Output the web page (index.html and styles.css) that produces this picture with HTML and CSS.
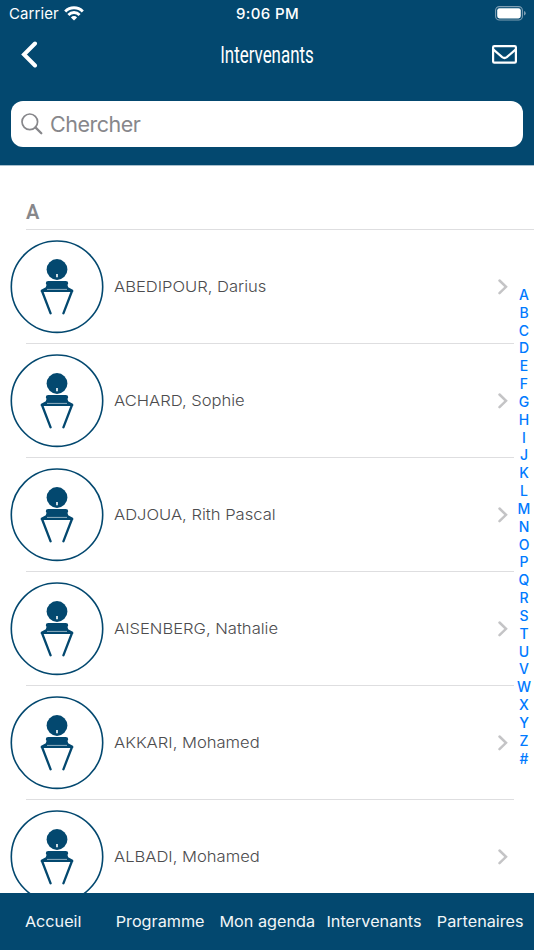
FILE: index.html
```html
<!DOCTYPE html>
<html lang="fr">
<head>
<meta charset="utf-8">
<title>Intervenants</title>
<link rel="stylesheet" href="styles.css">
</head>
<body>
<svg class="defs" aria-hidden="true">
  <symbol id="speaker" viewBox="0 0 94 94">
    <circle cx="47" cy="46.700" r="45.700" fill="#fff" stroke="#03486f" stroke-width="1.600"/>
    <circle cx="47" cy="29.500" r="10.400" fill="#03486f"/>
    <path d="M46.200 34h1.600v3.200h-1.600z" fill="#fff"/>
    <path d="M38.200 41h17.600q2.400 0 2.400 2.200l-.7 1.700.7 2.400 5 2.700v2H30.800v-2l5-2.700.7-2.400-.7-1.700q0-2.200 2.400-2.200z" fill="#03486f"/>
    <path d="M37 49.400h20" stroke="#b8cbd7" stroke-width=".8"/>
    <path d="M32 51 40.600 73.300M62 51 53.400 73.300" fill="none" stroke="#03486f" stroke-width="2.300" stroke-linecap="round"/>
  </symbol>
  <symbol id="chevron" viewBox="0 0 10 16"><path d="m1.500 1.500 6.500 6.300-6.500 6.300" fill="none" stroke="#c4c4c6" stroke-width="2.500" stroke-linecap="round" stroke-linejoin="miter"/></symbol>
</svg>
<main class="app">
  <header class="header">
    <div class="status">
      <div class="carrier"><span>Carrier</span>
        <svg class="wifi" viewBox="0 0 20 15"><g fill="none" stroke="#fff" stroke-width="2.900"><path d="M1.200 5.400a12.400 12.400 0 0 1 17.600 0M4.400 8.900a7.900 7.900 0 0 1 11.200 0"/></g><path d="M10 14.500 6.900 11.400a4.400 4.400 0 0 1 6.200 0z" fill="#fff"/></svg>
      </div>
      <time class="clock">9:06 PM</time>
      <svg class="battery" viewBox="0 0 31 15"><rect x=".6" y=".6" width="26.800" height="13.400" rx="3.800" fill="none" stroke="#7f9fb4" stroke-width="1.100"/><rect x="2.200" y="2.200" width="23.600" height="10.200" rx="2.300" fill="#fff"/><path d="M29 5q1.700.6 1.700 2.300T29 9.600z" fill="#7f9fb4"/></svg>
    </div>
    <div class="titlebar">
      <svg class="back" viewBox="0 0 17 27"><path d="M14 2.500 3 13.500l11 11" fill="none" stroke="#fff" stroke-width="4" stroke-linecap="round" stroke-linejoin="miter"/></svg>
      <h1 class="title">Intervenants</h1>
      <svg class="mail" viewBox="0 0 25 19"><rect x="1.100" y="1.100" width="22.800" height="16.500" rx="1.200" fill="none" stroke="#fff" stroke-width="2.200"/><path d="m1.500 4.700 8.700 7.400q2.300 1.800 4.600 0l8.700-7.400" fill="none" stroke="#fff" stroke-width="2.200"/></svg>
    </div>
    <div class="search">
      <svg class="glass" viewBox="0 0 22 22"><circle cx="8.800" cy="8.800" r="7.800" fill="none" stroke="#87878b" stroke-width="1.700"/><path d="m14.400 14.400 5.900 5.900" stroke="#87878b" stroke-width="2.300" stroke-linecap="round"/></svg>
      <span class="placeholder">Chercher</span>
    </div>
  </header>
  <section class="list">
    <h2 class="section">A</h2>
    <div class="row"><svg class="avatar"><use href="#speaker"/></svg><span class="name">ABEDIPOUR, Darius</span><svg class="chev"><use href="#chevron"/></svg></div>
    <div class="row"><svg class="avatar"><use href="#speaker"/></svg><span class="name">ACHARD, Sophie</span><svg class="chev"><use href="#chevron"/></svg></div>
    <div class="row"><svg class="avatar"><use href="#speaker"/></svg><span class="name">ADJOUA, Rith Pascal</span><svg class="chev"><use href="#chevron"/></svg></div>
    <div class="row"><svg class="avatar"><use href="#speaker"/></svg><span class="name">AISENBERG, Nathalie</span><svg class="chev"><use href="#chevron"/></svg></div>
    <div class="row"><svg class="avatar"><use href="#speaker"/></svg><span class="name">AKKARI, Mohamed</span><svg class="chev"><use href="#chevron"/></svg></div>
    <div class="row"><svg class="avatar"><use href="#speaker"/></svg><span class="name">ALBADI, Mohamed</span><svg class="chev"><use href="#chevron"/></svg></div>
    <nav class="index"><span>A</span><span>B</span><span>C</span><span>D</span><span>E</span><span>F</span><span>G</span><span>H</span><span>I</span><span>J</span><span>K</span><span>L</span><span>M</span><span>N</span><span>O</span><span>P</span><span>Q</span><span>R</span><span>S</span><span>T</span><span>U</span><span>V</span><span>W</span><span>X</span><span>Y</span><span>Z</span><span>#</span></nav>
  </section>
  <nav class="tabs"><span>Accueil</span><span>Programme</span><span>Mon agenda</span><span>Intervenants</span><span>Partenaires</span></nav>
</main>
</body>
</html>
```
FILE: styles.css
```css
* { box-sizing: border-box; }
body { margin: 0; background: #fff; font-family: Inter, "Liberation Sans", sans-serif; }
svg { display: block; flex: none; }
.defs { position: absolute; width: 0; height: 0; }
.app { width: 534px; height: 950px; display: flex; flex-direction: column; overflow: hidden; }
.header { flex: none; height: 165px; background: #03486f; color: #fff; box-shadow: 0 1px 0 #a9c0ce; position: relative; z-index: 1; }
.status { height: 28px; display: grid; grid-template-columns: 1fr auto 1fr; align-items: center; padding: 0 8px 0 9px; font-size: 15px; line-height: 28px; }
.carrier { display: flex; align-items: center; gap: 5px; letter-spacing: .1px; }
.wifi { width: 20px; height: 15px; margin-top: -2px; }
.clock { font-weight: 550; font-size: 15px; letter-spacing: .4px; }
.battery { width: 31px; height: 15px; justify-self: end; margin-top: -1px; }
.titlebar { height: 54px; display: grid; grid-template-columns: 1fr 94px 1fr; align-items: center; padding: 0 17px 0 21px; }
.back { width: 17px; height: 27px; margin-top: -1px; }
.title { margin: 2px 0 0 -4px; display: flex; justify-content: center; font: 400 23px/28px Roboto, sans-serif; white-space: nowrap; transform: scaleX(.735); }
.mail { width: 25px; height: 19px; justify-self: end; margin-top: -1px; }
.search { height: 46px; margin: 19px 11px 0; padding: 0 10px; display: flex; align-items: center; gap: 7px; background: #fff; border-radius: 12px; color: #87878b; }
.glass { width: 22px; height: 22px; }
.placeholder { font-size: 21.500px; line-height: 48px; letter-spacing: -.5px; }
.list { position: relative; flex: 1; min-height: 0; overflow: hidden; }
.section { height: 65px; margin: 0 0 1px 26px; padding-top: 31px; border-bottom: 1px solid #dedee0; color: #87878b; font: 600 20px/32px Roboto, sans-serif; }
.row { height: 114px; padding: 0 25px 0 10px; display: flex; align-items: center; background: linear-gradient(#dedee0, #dedee0) 26px 112px / 488px 1px no-repeat; }
.avatar { width: 94px; height: 94px; margin-top: -2px; }
.name { flex: 1; margin: -2px 0 0 9.500px; font-size: 15px; line-height: 24px; color: #4c4c4e; white-space: nowrap; font-weight: 350; transform: scaleX(1.105); transform-origin: left; }
.chev { width: 10px; height: 16px; margin: -2px 1px 0 0; }
.index { position: absolute; right: 0; top: 121px; width: 20px; display: grid; grid-auto-rows: 17.840px; justify-items: center; font-size: 14px; font-weight: 550; line-height: 17.840px; color: #007aff; }
.tabs { flex: none; height: 57px; padding-bottom: 1px; background: #03486f; color: #f2f6f8; display: grid; grid-template-columns: repeat(5, 1fr); align-items: center; justify-items: center; font-size: 15px; white-space: nowrap; }
.tabs span { transform: scaleX(1.080); }
```
